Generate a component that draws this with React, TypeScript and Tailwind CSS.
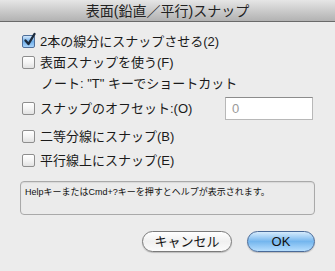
import React from "react";

const font = { fontFamily: '"Liberation Sans", "Noto Sans CJK JP", sans-serif' };

function Box({ checked = false }: { checked?: boolean }) {
  if (checked) {
    return (
      <div className="relative w-[13px] h-[13px] shrink-0">
        <div className="absolute inset-0 rounded-[2px] border border-[#4f6f9a] bg-gradient-to-b from-[#d3e8fb] via-[#6eaee9] to-[#a9d4fb]" />
        <svg className="absolute left-[1px] top-[-3px]" width="14" height="15" viewBox="0 0 14 15">
          <path d="M2.5 8.5 L5.5 12 L11.5 2" fill="none" stroke="#1b2a3c" strokeWidth="2.4" strokeLinecap="round" strokeLinejoin="round" />
        </svg>
      </div>
    );
  }
  return (
    <div className="w-[13px] h-[13px] shrink-0 rounded-[2px] border border-[#8e8e8e] bg-gradient-to-b from-[#ffffff] via-[#f4f4f4] to-[#e2e2e2] shadow-[inset_0_1px_0_#fff]" />
  );
}

function Row({ checked, children, className = "" }: { checked?: boolean; children: React.ReactNode; className?: string }) {
  return (
    <div className={"flex items-center h-[20px] " + className}>
      <Box checked={checked} />
      <span className="ml-[5px] text-[13px] text-[#1a1a1a] leading-none whitespace-nowrap">{children}</span>
    </div>
  );
}

export default function App() {
  return (
    <div className="w-[335px] h-[271px] bg-[#ececec] flex flex-col" style={font}>
      <div className="h-[22px] shrink-0 border-b border-[#6a6a6a] bg-gradient-to-b from-[#e6e6e6] to-[#b2b2b2] flex items-center justify-center">
        <span className="text-[14px] text-[#222] leading-none">表面(鉛直／平行)スナップ</span>
      </div>
      <div className="flex flex-col px-[22px]">
        <Row checked className="mt-[9px]">2本の線分にスナップさせる(2)</Row>
        <Row className="mt-[1px]">表面スナップを使う(F)</Row>
        <div className="mt-[1px] h-[20px] flex items-center pl-[19px] text-[13px] text-[#1a1a1a] leading-none whitespace-nowrap">
          ノート: "T" キーでショートカット
        </div>
        <div className="mt-[4px] h-[23px] flex items-center">
          <Box />
          <span className="ml-[5px] text-[13px] text-[#1a1a1a] leading-none whitespace-nowrap">スナップのオフセット:(O)</span>
          <div className="ml-auto w-[88px] h-[23px] bg-white border border-[#b8b8b8] border-t-[#8c8c8c] flex items-center pl-[6px] text-[13px] text-[#9a9a9a] leading-none">
            0
          </div>
        </div>
        <Row className="mt-[6px]">二等分線にスナップ(B)</Row>
        <Row className="mt-[4px]">平行線上にスナップ(E)</Row>
        <div className="mt-[11px] -mx-[2px] h-[34px] rounded-[4px] border border-[#a9a9a9] bg-[#ebebeb] shadow-[inset_0_1px_1px_rgba(0,0,0,0.08)] pl-[4px] pt-[6px] flex items-start leading-none">
          <span className="text-[9px] text-[#111] leading-none whitespace-nowrap">HelpキーまたはCmd+?キーを押すとヘルプが表示されます。</span>
        </div>
        <div className="mt-[16px] -mr-[2px] flex justify-end gap-[15px]">
          <button className="w-[90px] h-[21px] rounded-full border border-[#7a7a7a] bg-gradient-to-b from-[#ffffff] via-[#f0f0f0] to-[#fbfbfb] text-[13px] text-[#111] leading-none flex items-center justify-center shadow-[0_1px_1px_rgba(0,0,0,0.2)]">
            キャンセル
          </button>
          <button className="w-[68px] h-[21px] rounded-full border border-[#4a6a98] bg-gradient-to-b from-[#d6ebfc] via-[#74b6ee] to-[#b6defd] text-[13px] text-[#111] leading-none flex items-center justify-center shadow-[0_1px_1px_rgba(0,0,0,0.2)]">
            OK
          </button>
        </div>
      </div>
    </div>
  );
}
